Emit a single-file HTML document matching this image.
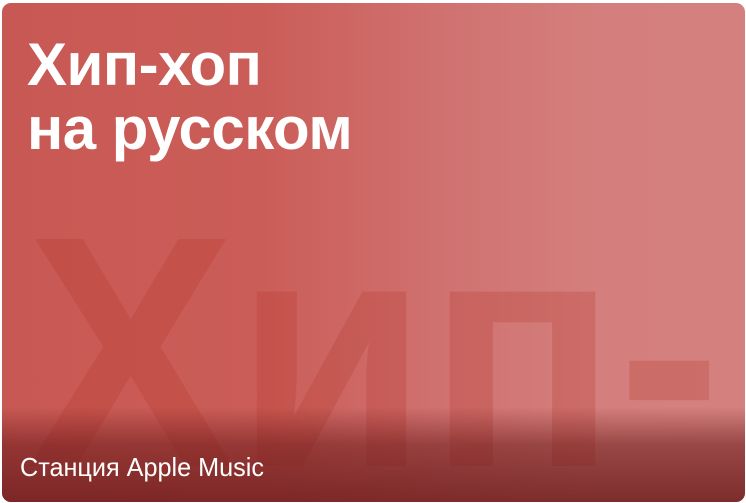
<!DOCTYPE html>
<html><head><meta charset="utf-8"><style>
html,body{margin:0;padding:0;background:#fff;width:746px;height:503px;overflow:hidden}
.card{position:absolute;left:2px;top:3px;width:743px;height:499px;border-radius:9px;overflow:hidden;
background:linear-gradient(90deg,#c85853 0%,#cb5d58 35%,#d07271 60%,#d47f7d 80%,#d3807e 100%);font-family:"Liberation Sans",sans-serif}
.big{position:absolute;left:24px;top:184px;font-size:330px;line-height:1;color:rgba(180,50,40,0.25);white-space:nowrap;letter-spacing:0px;font-weight:bold;transform:scaleX(0.95);transform-origin:left top}
.title{position:absolute;left:25px;top:30px;font-size:60px;font-weight:bold;color:#fff;line-height:64px;letter-spacing:-0.5px}
.shade{position:absolute;left:0;right:0;bottom:0;height:95px;background:linear-gradient(180deg,rgba(90,20,20,0) 0%,rgba(105,25,25,0.55) 40%,rgba(110,30,30,0.85) 100%)}
.sub{position:absolute;left:18px;top:449px;font-size:26px;color:#fff;letter-spacing:0px;transform:scaleX(0.97);transform-origin:left top}
</style></head><body>
<div class="card">
<div class="big">Хип-</div>
<div class="title">Хип-хоп<br>на русском</div>
<div class="shade"></div>
<div class="sub">Станция Apple Music</div>
</div>
</body></html>
